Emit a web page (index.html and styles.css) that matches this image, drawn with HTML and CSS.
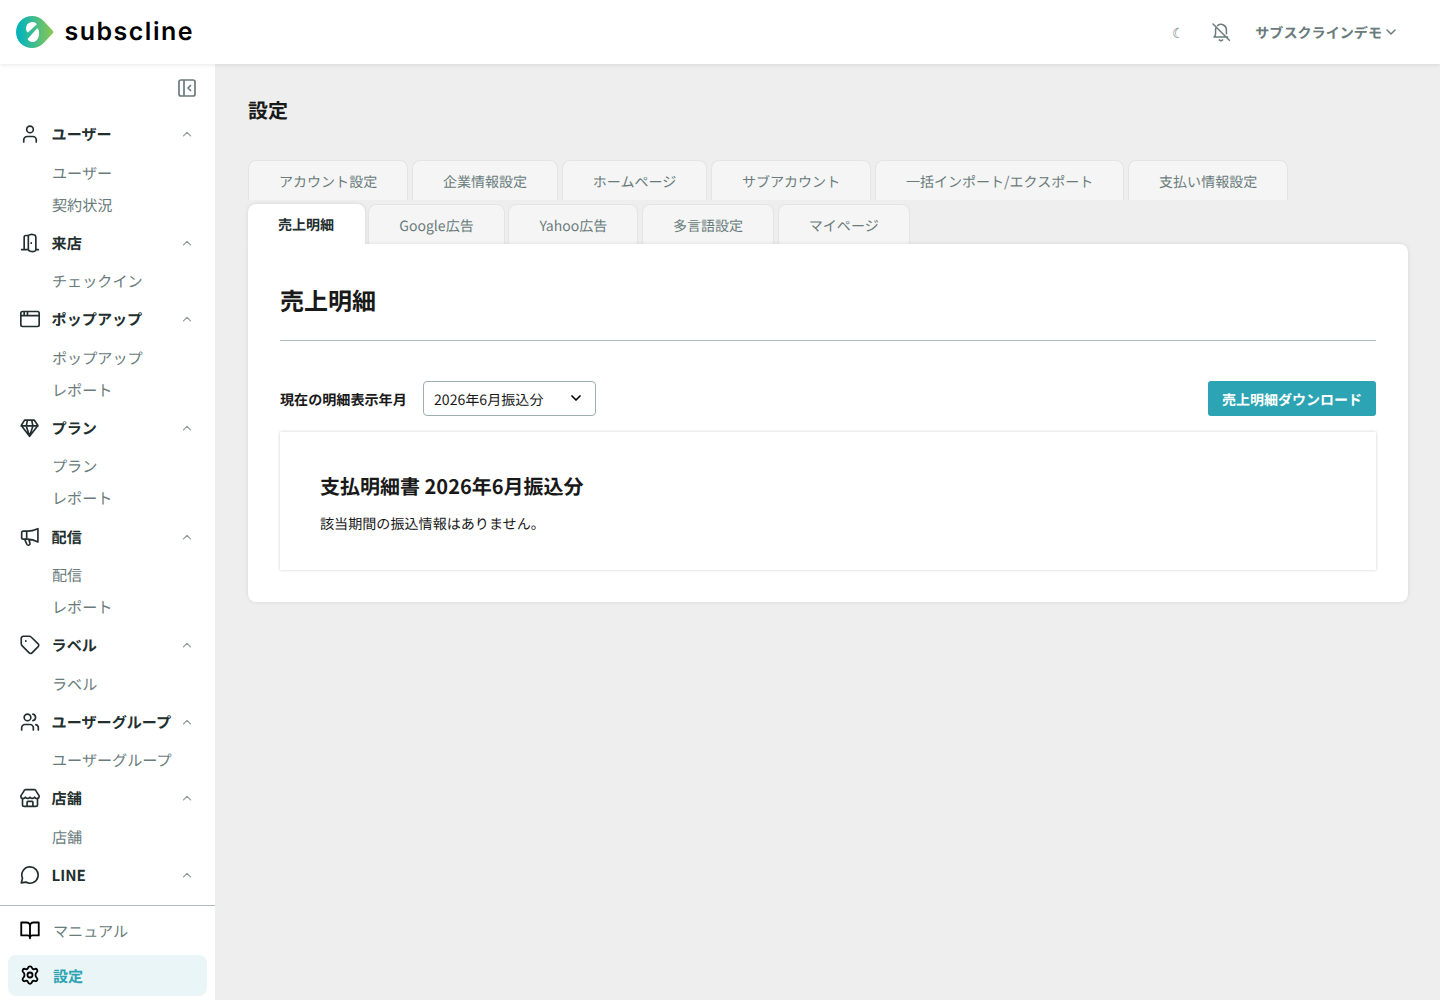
FILE: index.html
```html
<!DOCTYPE html>
<html lang="ja">
<head>
    <meta charset="UTF-8">
    <meta name="viewport" content="width=device-width, initial-scale=1.0">
    <title>設定 | subscline</title>
    <link rel="stylesheet" href="styles.css">
</head>
<body>
    <!-- Header -->
    <header class="header">
        <a class="logo" href="#">
            <svg width="180" height="36" viewBox="0 0 180 36">
                <defs>
                    <linearGradient id="logoGradient" x1="0" y1="0" x2="1" y2="0">
                        <stop offset="0.1" stop-color="#08b4b8"/>
                        <stop offset="1" stop-color="#8cc751"/>
                    </linearGradient>
                </defs>
                <path fill="url(#logoGradient)" d="M16 2C7 2 0 9 0 18s7 16 16 16c4.500 0 8.500-1.800 11.500-4.800l9.300-9.900c.7-.8.7-1.800 0-2.600l-9.300-9.900C24.500 3.800 20.500 2 16 2z"/>
                <path fill="#fff" d="M12 18.400C9 17.500 8.800 8 16.500 8c1.800 0 3.400.7 4.400 2.200zM21.200 14.200c3 1 3.200 13.800-4.700 13.800-2.200 0-4-.9-4.900-3z"/>
                <text class="logo-text" x="48.500" y="25.600" textLength="128" lengthAdjust="spacing">subscline</text>
            </svg>
        </a>
        <div class="header-menu">
            <span class="moon">☾</span>
            <svg class="icon bell" viewBox="0 0 24 24"><path d="M8 4.300A6.500 6.500 0 0 1 18.500 9.500v4.500M20 18H3.500a5 5 0 0 0 2-4V9.500c0-1 .2-2 .6-2.900M10 21.500a3 3 0 0 0 4 0M2.500 2.500l19.500 19.500"/></svg>
            <span class="account">サブスクラインデモ</span>
            <svg class="icon account-arrow" viewBox="0 0 12 12"><path d="M2 4l4 4 4-4"/></svg>
        </div>
    </header>

    <div class="container">
        <!-- Sidebar -->
        <aside class="sidebar">
            <div class="sidebar-toggle">
                <svg class="icon" viewBox="0 0 24 24"><path d="M4 6a2 2 0 0 1 2-2h12a2 2 0 0 1 2 2v12a2 2 0 0 1-2 2H6a2 2 0 0 1-2-2zM9 4v16M15.500 9.500l-2.500 2.500 2.500 2.500"/></svg>
            </div>
            <nav class="nav">
                <div class="nav-head">
                    <svg class="icon" viewBox="0 0 24 24"><path d="M8 6.500a4 4 0 1 0 8 0a4 4 0 0 0-8 0M4.500 21.500v-2.500a4 4 0 0 1 4-4h7a4 4 0 0 1 4 4v2.500"/></svg>
                    <span>ユーザー</span>
                    <svg class="icon arrow" viewBox="0 0 10 10"><path d="M1.500 6.800L5 3.300l3.500 3.500"/></svg>
                </div>
                <a class="nav-item">ユーザー</a>
                <a class="nav-item">契約状況</a>

                <div class="nav-head">
                    <svg class="icon" viewBox="0 0 24 24"><path d="M2 20h8M19 20h3M5 20V5a2 2 0 0 1 2-2h3M10 20V4a2 2 0 0 1 1.500-1.900 9 9 0 0 1 5 0A3 3 0 0 1 19 5v15a2 2 0 0 1-1.500 1.900 9 9 0 0 1-5 0A3 3 0 0 1 10 20M13.500 11.800v.4"/></svg>
                    <span>来店</span>
                    <svg class="icon arrow" viewBox="0 0 10 10"><path d="M1.500 6.800L5 3.300l3.500 3.500"/></svg>
                </div>
                <a class="nav-item">チェックイン</a>

                <div class="nav-head">
                    <svg class="icon" viewBox="0 0 24 24"><path d="M1 5a2 2 0 0 1 2-2h18a2 2 0 0 1 2 2v14a2 2 0 0 1-2 2H3a2 2 0 0 1-2-2zM1 8h22M5 3v5M9 3v5"/></svg>
                    <span>ポップアップ</span>
                    <svg class="icon arrow" viewBox="0 0 10 10"><path d="M1.500 6.800L5 3.300l3.500 3.500"/></svg>
                </div>
                <a class="nav-item">ポップアップ</a>
                <a class="nav-item">レポート</a>

                <div class="nav-head">
                    <svg class="icon" viewBox="0 0 24 24"><path d="M5.500 2.500h11.500l4.500 6.500-10 13L1.500 9zM1.500 9.500h20M11.500 22L7.500 9.500l1.500-7M11.500 22l4-12.500-1.500-7"/></svg>
                    <span>プラン</span>
                    <svg class="icon arrow" viewBox="0 0 10 10"><path d="M1.500 6.800L5 3.300l3.500 3.500"/></svg>
                </div>
                <a class="nav-item">プラン</a>
                <a class="nav-item">レポート</a>

                <div class="nav-head">
                    <svg class="icon" viewBox="0 0 24 24"><path d="M4 5h5c5 0 9-1.500 12.500-3v16c-3.500-2-7.500-3.500-12.500-3.500H4a2 2 0 0 1-2-2V7a2 2 0 0 1 2-2zM8 5v9.500M5.500 14.500l2.700 6.200a2 2 0 0 0 3.700-1.500L10.300 14.500"/></svg>
                    <span>配信</span>
                    <svg class="icon arrow" viewBox="0 0 10 10"><path d="M1.500 6.800L5 3.300l3.500 3.500"/></svg>
                </div>
                <a class="nav-item">配信</a>
                <a class="nav-item">レポート</a>

                <div class="nav-head">
                    <svg class="icon" viewBox="0 0 24 24"><path d="M1.500 10.500V4a2.500 2.500 0 0 1 2.500-2.500h7.200a3 3 0 0 1 2.100.9l8.500 8.200a2.400 2.400 0 0 1 0 3.400l-7.400 7.500a2.400 2.400 0 0 1-3.400 0L2.400 12.700a3 3 0 0 1-.9-2.200zM7 7v.4"/></svg>
                    <span>ラベル</span>
                    <svg class="icon arrow" viewBox="0 0 10 10"><path d="M1.500 6.800L5 3.300l3.500 3.500"/></svg>
                </div>
                <a class="nav-item">ラベル</a>

                <div class="nav-head">
                    <svg class="icon" viewBox="0 0 24 24"><path d="M5 6.500a4 4 0 1 0 8 0a4 4 0 0 0-8 0M2 21.500v-2.500a4 4 0 0 1 4-4h6a4 4 0 0 1 4 4v2.500M15.500 2.600a4 4 0 0 1 0 7.800M22 21.500v-2.500a4 4 0 0 0-3-3.900"/></svg>
                    <span>ユーザーグループ</span>
                    <svg class="icon arrow" viewBox="0 0 10 10"><path d="M1.500 6.800L5 3.300l3.500 3.500"/></svg>
                </div>
                <a class="nav-item">ユーザーグループ</a>

                <div class="nav-head">
                    <svg class="icon" viewBox="0 0 24 24"><path d="M3 12.500V20a2 2 0 0 0 2 2h14a2 2 0 0 0 2-2v-7.500M4.500 4A2.500 2.500 0 0 1 6.700 2h10.600a2.500 2.500 0 0 1 2.200 2L23 9.500c0 4-4 4-5.500 1.500-1.500 2-4 2-5.500 0-1.500 2-4 2-5.500 0C5 13.500 1 13.500 1 9.500zM8.500 22v-5a1 1 0 0 1 1-1h5a1 1 0 0 1 1 1v5"/></svg>
                    <span>店舗</span>
                    <svg class="icon arrow" viewBox="0 0 10 10"><path d="M1.500 6.800L5 3.300l3.500 3.500"/></svg>
                </div>
                <a class="nav-item">店舗</a>

                <div class="nav-head">
                    <svg class="icon" viewBox="0 0 24 24"><path d="M1.500 21.500L3 16A9.800 9.800 0 1 1 7 20.500z"/></svg>
                    <span>LINE</span>
                    <svg class="icon arrow" viewBox="0 0 10 10"><path d="M1.500 6.800L5 3.300l3.500 3.500"/></svg>
                </div>
            </nav>
            <div class="sidebar-bottom">
                <a class="bottom-item">
                    <svg class="icon" viewBox="0 0 24 24"><path d="M1.500 3H8a4 4 0 0 1 4 4v14a3 3 0 0 0-3-2.500H1.500zM22.500 3H16a4 4 0 0 0-4 4v14a3 3 0 0 1 3-2.500h7.500zM12 20v2"/></svg>
                    <span>マニュアル</span>
                </a>
                <a class="bottom-item active">
                    <svg class="icon" viewBox="0 0 24 24"><path d="M9.700 3.200C10.200 1 13.800 1 14.300 3.200c.4 1.600 2 2.400 3.400 1.600 2.500-1 4.300 2.200 2.500 3.800-1.200 1-1.600 1.900-1.600 3.400s.4 2.400 1.600 3.400c1.800 1.600 0 4.800-2.500 3.800-1.400-.8-3 0-3.400 1.600-.5 2.200-4.100 2.200-4.600 0-.4-1.600-2-2.400-3.400-1.600-2.500 1-4.300-2.200-2.500-3.800 1.200-1 1.600-1.900 1.600-3.400s-.4-2.400-1.600-3.400C2 7 3.800 3.800 6.300 4.800c1.400.8 3 0 3.400-1.600zM9 12a3 3 0 1 0 6 0a3 3 0 0 0-6 0"/></svg>
                    <span>設定</span>
                </a>
            </div>
        </aside>

        <!-- Main content -->
        <main class="main">
            <h1 class="page-title">設定</h1>
            <div class="tabs">
                <a class="tab">アカウント設定</a>
                <a class="tab">企業情報設定</a>
                <a class="tab">ホームページ</a>
                <a class="tab">サブアカウント</a>
                <a class="tab">一括インポート/エクスポート</a>
                <a class="tab">支払い情報設定</a>
            </div>
            <div class="tabs">
                <a class="tab active">売上明細</a>
                <a class="tab">Google広告</a>
                <a class="tab">Yahoo広告</a>
                <a class="tab">多言語設定</a>
                <a class="tab">マイページ</a>
            </div>
            <section class="panel">
                <h2 class="panel-title">売上明細</h2>
                <div class="toolbar">
                    <span class="toolbar-label">現在の明細表示年月</span>
                    <div class="select">
                        <span>2026年6月振込分</span>
                        <svg class="icon" viewBox="0 0 12 12"><path d="M2 4l4 4 4-4"/></svg>
                    </div>
                    <button class="download">売上明細ダウンロード</button>
                </div>
                <div class="statement">
                    <h3>支払明細書 2026年6月振込分</h3>
                    <p>該当期間の振込情報はありません。</p>
                </div>
            </section>
        </main>
    </div>
</body>
</html>
```
FILE: styles.css
```css
* {
    box-sizing: border-box;
}

body {
    margin: 0;
    height: 100vh;
    overflow: hidden;
    display: flex;
    flex-direction: column;
    background-color: #eee;
    color: #191919;
    font-family: "Noto Sans CJK JP", sans-serif;
    font-size: 14.080px;
    line-height: 20px;
    text-rendering: geometricPrecision;
}

h1, h2, h3, p {
    margin: 0;
}

.icon {
    display: block;
    flex: none;
    width: 20px;
    height: 20px;
    fill: none;
    stroke: currentColor;
    stroke-width: 2;
    stroke-linecap: round;
    stroke-linejoin: round;
}

/* Header */
.header {
    position: relative;
    z-index: 1;
    flex: none;
    display: flex;
    align-items: center;
    justify-content: space-between;
    height: 64px;
    padding: 0 43px 0 16px;
    background-color: #fff;
    box-shadow: 0 1px 4px rgba(0, 0, 0, 0.1);
}

.logo svg {
    display: block;
}

.logo-text {
    font-family: Inter, sans-serif;
    font-size: 25px;
    font-weight: 600;
    fill: #000;
}

.header-menu {
    display: flex;
    align-items: center;
    color: #697b7b;
}

.moon {
    width: 14px;
    margin-right: 26px;
    padding-top: 2px;
    font-size: 14px;
    text-align: center;
}

.bell {
    margin-right: 24px;
    stroke-width: 1.8;
}

.account {
    padding-top: 2px;
    font-weight: bold;
}

.account-arrow {
    width: 12px;
    height: 12px;
    margin-left: 3px;
    stroke-width: 1.5;
}

/* Sidebar */
.container {
    flex: 1;
    display: flex;
    min-height: 0;
}

.sidebar {
    display: flex;
    flex-direction: column;
    flex: none;
    width: 215px;
    background-color: #fff;
    font-size: 15.100px;
}

.sidebar-toggle {
    display: flex;
    justify-content: flex-end;
    flex: none;
    height: 48px;
    padding: 12px 16px 0 0;
    color: #697b7b;
}

.sidebar-toggle .icon {
    width: 24px;
    height: 24px;
    stroke-width: 1.7;
}

.nav {
    flex: 1;
    min-height: 0;
    overflow: hidden;
}

.nav-head {
    display: flex;
    align-items: center;
    height: 44.600px;
    padding: 0 23px 0 20px;
    color: #232f2f;
    font-weight: bold;
}

.nav-head span {
    flex: 1;
    margin-left: 11.600px;
    white-space: nowrap;
}

.nav-head .arrow {
    width: 10px;
    height: 10px;
    color: #8d9999;
    stroke-width: 1.2;
}

.nav-item {
    display: block;
    height: 32px;
    padding-left: 52px;
    color: #697b7b;
    line-height: 32px;
}

.sidebar-bottom {
    flex: none;
    height: 95px;
    padding: 4px 8px 0;
    border-top: 1px solid #adbdbd;
}

.bottom-item {
    display: flex;
    align-items: center;
    gap: 13px;
    height: 41px;
    margin-bottom: 4px;
    padding: 0 0 1px 12px;
    border-radius: 8px;
    color: #697b7b;
}

.bottom-item span {
    padding-top: 2px;
}

.bottom-item .icon {
    color: #000;
    stroke-width: 2.2;
}

.bottom-item.active {
    background-color: #eaf5f7;
    color: #2ca4b4;
    font-weight: bold;
}

/* Main */
.main {
    flex: 1;
    padding: 32px 32px 0 33px;
}

.page-title {
    height: 28px;
    margin-bottom: 36px;
    font-size: 20px;
    line-height: 28px;
}

.tabs {
    display: flex;
    gap: 3.700px;
    margin-bottom: 4px;
}

.tab {
    height: 40px;
    padding: 11px 30px 0;
    border: 1px solid #e4e4e4;
    border-bottom: 0;
    border-radius: 8px 8px 0 0;
    background-color: #f5f5f5;
    color: #697b7b;
    font-size: 14.040px;
    white-space: nowrap;
}

.tab.active {
    position: relative;
    z-index: 1;
    width: 116.600px;
    border: 0;
    background-color: #fff;
    box-shadow: 0 0 4px rgba(0, 0, 0, 0.1);
    clip-path: inset(-4px -4px 0 -4px);
    color: #232f2f;
    font-weight: bold;
}

.panel {
    position: relative;
    height: 358px;
    margin-top: -4px;
    padding: 32px;
    border-radius: 0 8px 8px 8px;
    background-color: #fff;
    box-shadow: 0 0 4px rgba(0, 0, 0, 0.1);
}

.panel-title {
    height: 65px;
    padding-top: 6px;
    border-bottom: 1px solid #adbfbf;
    font-size: 24px;
    line-height: 36px;
}

.toolbar {
    display: flex;
    align-items: center;
    height: 35px;
    margin: 40px 0 16px;
}

.toolbar-label {
    width: 127px;
    padding-top: 2px;
    font-weight: bold;
}

.select {
    display: flex;
    align-items: center;
    justify-content: space-between;
    width: 173px;
    height: 35px;
    margin-left: 16px;
    padding: 2px 13px 0 10px;
    border: 1px solid #9eafaf;
    border-radius: 4px;
}

.select .icon {
    width: 12px;
    height: 12px;
    margin-top: -3px;
    stroke: #000;
    stroke-width: 1.7;
}

.download {
    width: 168px;
    height: 35px;
    margin-left: auto;
    padding: 2px 0 0;
    border: none;
    border-radius: 3px;
    background-color: #2ca4b4;
    color: #fff;
    font-family: inherit;
    font-size: 14px;
    font-weight: bold;
    text-rendering: inherit;
    cursor: pointer;
}

.statement {
    height: 138px;
    padding: 40px;
    box-shadow: 0 0 3px rgba(0, 0, 0, 0.2);
}

.statement h3 {
    font-size: 20px;
    line-height: 28px;
}

.statement p {
    margin-top: 14px;
}
```
